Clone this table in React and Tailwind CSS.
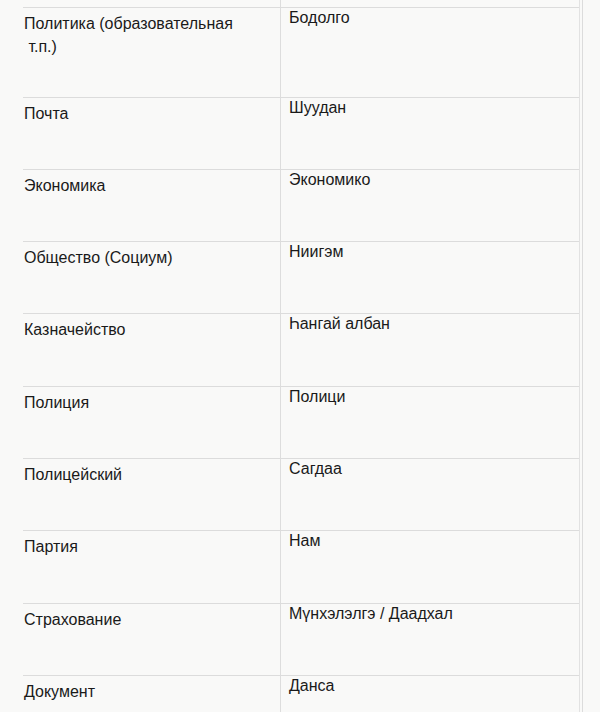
const rows = [
  { ru: ["Политика (образовательная", "\u00a0т.п.)"], mn: "Бодолго", h: "h-[90px]" },
  { ru: ["Почта"], mn: "Шуудан", h: "h-[72px]" },
  { ru: ["Экономика"], mn: "Экономико", h: "h-[72px]" },
  { ru: ["Общество (Социум)"], mn: "Ниигэм", h: "h-[72px]" },
  { ru: ["Казначейство"], mn: "Һангай албан", h: "h-[73px]" },
  { ru: ["Полиция"], mn: "Полици", h: "h-[72px]" },
  { ru: ["Полицейский"], mn: "Сагдаа", h: "h-[72px]" },
  { ru: ["Партия"], mn: "Нам", h: "h-[73px]" },
  { ru: ["Страхование"], mn: "Мүнхэлэлгэ / Даадхал", h: "h-[72px]" },
  { ru: ["Документ"], mn: "Данса", h: "h-[72px]" },
];

export default function App() {
  return (
    <div
      className="w-[600px] h-[712px] overflow-hidden bg-[#f9f9f8] text-[16px] text-[#1a1a1a]"
      style={{ fontFamily: '"Liberation Sans", Arial, sans-serif' }}
    >
      <div className="ml-[23px] w-[560px] border-r border-[#dcdcdc] pr-[2px]">
        <div className="border-r border-[#e2e2e2]">
          <div className="grid grid-cols-[258px_1fr] h-[7px]">
            <div className="border-r border-[#dddddd]" />
            <div />
          </div>
          {rows.map((r) => (
            <div key={r.mn} className={`grid grid-cols-[258px_1fr] border-t border-[#dcdcdc] ${r.h}`}>
              <div className="border-r border-[#dddddd] pl-[1px] pt-[4px] leading-[23px]">
                {r.ru.map((l) => (
                  <div key={l}>{l}</div>
                ))}
              </div>
              <div className="pl-[8px] leading-[20px]">{r.mn}</div>
            </div>
          ))}
        </div>
      </div>
    </div>
  );
}
